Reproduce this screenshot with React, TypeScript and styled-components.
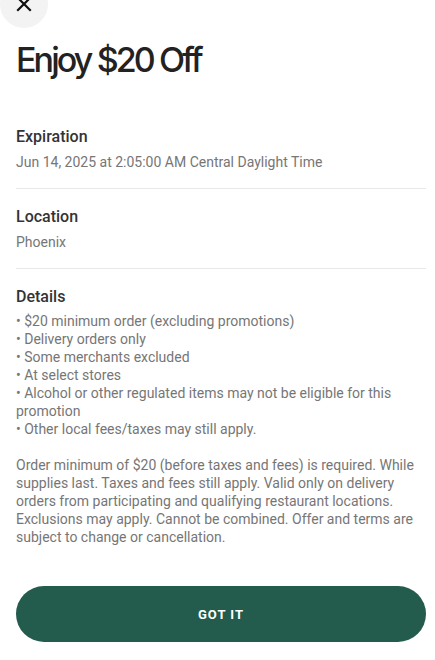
import React from "react";
import styled, { createGlobalStyle } from "styled-components";

const Global = createGlobalStyle`
  html, body { margin: 0; padding: 0; background: #ffffff; }
  body { font-family: Roboto, "Noto Sans", Arial, sans-serif; -webkit-font-smoothing: antialiased; }
  * { box-sizing: border-box; }
`;

const Page = styled.div`
  width: 435px;
  min-height: 660px;
  background: #fff;
  overflow: hidden;
  display: flex;
  flex-direction: column;
`;

const TopBar = styled.div`
  margin-top: -20px;
  height: 48px;
  display: flex;
  align-items: center;
`;

const CloseButton = styled.button`
  width: 48px;
  height: 48px;
  border-radius: 50%;
  border: none;
  background: #f3f3f4;
  display: flex;
  align-items: center;
  justify-content: center;
  padding: 0;
  cursor: pointer;
`;

const Content = styled.div`
  padding: 0 9px 0 16px;
  display: flex;
  flex-direction: column;
`;

const Title = styled.h1`
  margin: 10px 0 43px;
  font-family: Inter, "Noto Sans", sans-serif;
  font-size: 34px;
  line-height: 44px;
  font-weight: 500;
  letter-spacing: -2.9px;
  color: #222222;
`;

const Section = styled.section<{ $last?: boolean }>`
  padding: ${(p) => (p.$last ? "16px 0 0" : "0 0 16px")};
  border-bottom: ${(p) => (p.$last ? "none" : "1px solid #e8e8ea")};
  & + & { padding-top: 16px; }
`;

const Heading = styled.h2`
  margin: 0 0 3px;
  font-family: Roboto, sans-serif;
  font-size: 16px;
  line-height: 24px;
  font-weight: 500;
  color: #333333;
`;

const Body = styled.div<{ $dense?: boolean }>`
  font-family: Roboto, sans-serif;
  font-size: 14px;
  line-height: ${(p) => (p.$dense ? "18px" : "20px")};
  color: #767676;
`;

const Para = styled.p`
  margin: 0;
  & + & { margin-top: 18px; }
`;

const ButtonWrap = styled.div`
  padding: 40px 9px 0 16px;
`;

const PrimaryButton = styled.button`
  width: 100%;
  height: 56px;
  border: none;
  border-radius: 28px;
  background: #235b4d;
  color: #ffffff;
  font-family: Roboto, sans-serif;
  font-size: 13px;
  font-weight: 700;
  letter-spacing: 1px;
  cursor: pointer;
`;

const bullets = [
  "$20 minimum order (excluding promotions)",
  "Delivery orders only",
  "Some merchants excluded",
  "At select stores",
  "Alcohol or other regulated items may not be eligible for this promotion",
  "Other local fees/taxes may still apply.",
];

export default function App() {
  return (
    <Page>
      <Global />
      <TopBar>
        <CloseButton aria-label="Close">
          <svg width="16" height="16" viewBox="0 0 16 16">
            <path d="M2 2 L14 14 M14 2 L2 14" stroke="#111" strokeWidth="2.2" strokeLinecap="square" />
          </svg>
        </CloseButton>
      </TopBar>
      <Content>
        <Title>Enjoy $20 Off</Title>
        <Section>
          <Heading>Expiration</Heading>
          <Body>Jun 14, 2025 at 2:05:00 AM Central Daylight Time</Body>
        </Section>
        <Section>
          <Heading>Location</Heading>
          <Body>Phoenix</Body>
        </Section>
        <Section $last>
          <Heading>Details</Heading>
          <Body $dense>
            <Para>
              {bullets.map((b, i) => (
                <React.Fragment key={i}>
                  {"\u2022 " + b}
                  {i < bullets.length - 1 && <br />}
                </React.Fragment>
              ))}
            </Para>
            <Para>
              Order minimum of $20 (before taxes and fees) is required. While supplies last. Taxes and fees still
              apply. Valid only on delivery orders from participating and qualifying restaurant locations.
              Exclusions may apply. Cannot be combined. Offer and terms are subject to change or cancellation.
            </Para>
          </Body>
        </Section>
      </Content>
      <ButtonWrap>
        <PrimaryButton>GOT IT</PrimaryButton>
      </ButtonWrap>
    </Page>
  );
}
